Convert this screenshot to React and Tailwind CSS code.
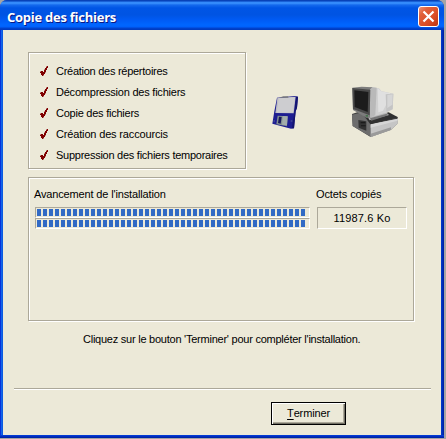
import React from "react";

const STEPS = [
  { label: "Création des répertoires", spacing: "tracking-[-0.27px]" },
  { label: "Décompression des fichiers", spacing: "tracking-[-0.22px]" },
  { label: "Copie des fichiers", spacing: "tracking-[-0.24px]" },
  { label: "Création des raccourcis", spacing: "tracking-[-0.16px]" },
  { label: "Suppression des fichiers temporaires", spacing: "tracking-[-0.26px]" },
];

// Etched frame: grey line with a white line one pixel down and right.
const ETCHED =
  "border border-[#aca899] shadow-[1px_1px_0_#fff,inset_1px_1px_0_#fff]";
const SUNKEN =
  "border border-t-[#aca899] border-l-[#aca899] border-r-white border-b-white";

function Check() {
  return (
    <svg className="mt-[6px] h-[10px] w-[9px] shrink-0" viewBox="0 0 9 10" shapeRendering="crispEdges">
      <path
        fill="#800000"
        d="M7 0h1v1h-1zM6 1h2v1h-2zM5 2h2v1h-2zM5 3h2v1h-2zM4 4h2v1h-2zM1 5h2v1h-2zM4 5h2v1h-2zM0 6h5v1h-5zM1 7h4v1h-4zM1 8h3v1h-3zM2 9h1v1h-1z"
      />
      <path fill="#c08a80" d="M6 0h1v1h-1zM4 3h1v1h-1zM5 6h1v1h-1zM0 5h1v1h-1zM3 9h1v1h-1z" />
    </svg>
  );
}

function Floppy() {
  return (
    <svg className="h-[60px] w-[60px]" viewBox="0 0 180 180">
      <path fill="#1d1d91" d="M51 53 105 48 114 50 111 83 107 94 102 145 93 146 37 131 43 94Z" />
      <path fill="#14146f" d="M108 50 114 50 111 83 107 94 102 145 96 145 98 126 103 101Z" />
      <path fill="#bdbdc4" d="M52 54 107 50 101 100 46 99Z" />
      <path fill="#cdcdd0" d="M56 55 105 52 99 98 50 98Z" />
      <path fill="#76777b" d="M57 53h28v-4H70Z" />
      <path fill="#829091" d="M53 107 83 109 81 139 49 133Z" />
      <path fill="#a3adab" d="M68 108 83 109 81 136 66 134Z" />
      <path fill="#17175b" d="M57 110 65 111 62 131 54 129Z" />
      <path fill="#3b3f95" d="M92 120h5v6h-5ZM40 120h5v7h-5Z" />
    </svg>
  );
}

function Computer() {
  return (
    <svg className="h-[66px] w-[70px]" viewBox="0 0 210 198">
      <path fill="#414141" d="M36 108 63 99 173 117 172 137 153 155 92 177 38 144Z" />
      <path fill="#6d6d6d" d="M36 110 62 104 94 138 92 176 38 144Z" />
      <path fill="#333" d="M55 126 79 130 79 158 56 149Z" />
      <path fill="#c5c5c5" d="M92 139 174 122 173 137 153 155 92 177Z" />
      <path fill="#d6d6d6" d="M92 139 174 122 172 128 92 149Z" />
      <path fill="#9a9a9a" d="M92 167 153 148 153 156 92 177Z" />
      <path fill="#303030" d="M77 119 146 103 174 118 91 139Z" />
      <path fill="#b5b5b5" d="M82 115 137 101 147 111 89 127Z" />
      <path fill="#777" d="M90 121 140 107 145 112 94 128Z" />
      <path fill="#d0d0d0" d="M91 27 117 31 124 39 160 47 158 94 139 104 91 118Z" />
      <path fill="#e0e0e0" d="M113 31 124 40 151 46 140 77 129 98 115 103Z" />
      <path fill="#c4c4c4" d="M137 49 160 47 158 94 139 101Z" />
      <path fill="#d6d6d6" d="M142 51 158 49 157 80 142 90Z" />
      <path fill="#7d7d7d" d="M37 29 65 26 97 28 92 119 79 119 39 96Z" />
      <path fill="#b9b9b9" d="M90 34 97 28 110 29 106 112 90 119Z" />
      <path fill="#4a4a4a" d="M37 30 91 35 89 112 39 93Z" />
      <path fill="#1c1c1c" d="M43 37 85 42 83 102 44 87Z" />
      <path fill="#46744d" d="M77 111h7v5h-7Z" />
      <path fill="#1b1b1b" d="M62 132h14v4H62ZM63 142h14v3H63Z" />
    </svg>
  );
}

function Progress() {
  return (
    <div className={`flex h-[11px] w-[275px] gap-[2px] pt-px pl-px ${SUNKEN}`}>
      {Array.from({ length: 45 }, (_, i) => (
        <span key={i} className="h-[7px] w-1 shrink-0 bg-[#316ac5]" />
      ))}
    </div>
  );
}

export default function App() {
  return (
    <div className="h-[439px] w-[446px] overflow-hidden bg-[#a5a5a5] font-['Liberation_Sans',Arial,sans-serif] text-[11px] leading-[13px] text-black">
      <div className="flex h-[438px] w-[444px] flex-col rounded-t-[7px] bg-[linear-gradient(90deg,#0831d9_0,#0831d9_1px,#166aee_1px,#0855dd_3px,#0855dd_441px,#003dd0_441px,#001ea0_444px)] px-[3px]">
        <header className="-mx-[3px] flex h-[30px] shrink-0 items-start rounded-t-[7px] bg-[linear-gradient(180deg,#0842b8_0,#0842b8_1px,#2b80f5_2px,#3d95ff_3px,#1469ed_5px,#0055e5_8px,#0054e3_15px,#005bf5_20px,#0066ff_25px,#0060fa_27px,#0144d0_28px,#0038bc_30px)] pl-[7px]">
          <h1 className="mt-[9px] font-['Open_Sans','Noto_Sans',sans-serif] text-[13px] leading-[17px] font-bold tracking-[-0.25px] whitespace-nowrap text-white [text-shadow:1px_1px_0_#0a1883]">
            Copie des fichiers
          </h1>
          <button className="mt-[6px] mr-[5px] ml-auto flex h-[21px] w-[21px] items-center justify-center rounded-[3px] border border-white bg-[linear-gradient(135deg,#ed9378_0%,#e1613b_25%,#da4c25_65%,#b93411_100%)]">
            <svg className="h-[13px] w-[13px]" viewBox="0 0 13 13">
              <path d="M1.500 1.500l10 10M11.500 1.500l-10 10" stroke="#fff" strokeWidth="2.2" />
            </svg>
          </button>
        </header>

        <main className="flex h-[405px] shrink-0 flex-col bg-[#ece9d8]">
          <section className="mt-[22px] ml-[25px] flex">
            <ul className={`h-[117px] w-[218px] pt-[7px] pl-[11px] ${ETCHED}`}>
              {STEPS.map(({ label, spacing }) => (
                <li key={label} className="flex h-[21px] items-start gap-[7px] whitespace-nowrap">
                  <Check />
                  <span className={`mt-[5px] ${spacing}`}>{label}</span>
                </li>
              ))}
            </ul>
            <div className="mt-[28px] ml-[14px]">
              <Floppy />
            </div>
            <div className="mt-[26px] ml-[20px]">
              <Computer />
            </div>
          </section>

          <section className={`mt-2 ml-[25px] flex h-[144px] w-[386px] shrink-0 pt-[10px] pl-[6px] ${ETCHED}`}>
            <div className="w-[282px]">
              <p className="-ml-px h-[19px] tracking-[-0.15px] whitespace-nowrap">Avancement de l'installation</p>
              <Progress />
              <Progress />
            </div>
            <div className="w-[90px]">
              <p className="-ml-px h-[19px] tracking-[-0.1px] whitespace-nowrap">Octets copiés</p>
              <p className={`h-[22px] pt-[4px] text-center tracking-[0.15px] ${SUNKEN}`}>11987.6 Ko</p>
            </div>
          </section>

          <p className="mt-[12px] ml-[80px] h-[13px] tracking-[-0.24px] whitespace-nowrap">
            Cliquez sur le bouton 'Terminer' pour compléter l'installation.
          </p>

          <hr className="mt-[42px] ml-[11px] h-[2px] w-[417px] border-t border-b border-t-[#aca899] border-b-white" />

          <button className="mt-[12px] ml-[268px] flex h-[23px] w-[75px] items-start justify-center border border-black bg-[#ece9d8] pt-[4px] tracking-[-0.15px] shadow-[inset_1px_1px_0_#fff,inset_-1px_-1px_0_#716f64,inset_-2px_-2px_0_#aca899]">
            <span className="underline underline-offset-2">T</span>erminer
          </button>
        </main>
        <footer className="-mx-[3px] h-[3px] shrink-0 bg-[linear-gradient(180deg,#0845dd_0,#0031c8_1px,#001ea0_3px)]" />
      </div>
    </div>
  );
}
